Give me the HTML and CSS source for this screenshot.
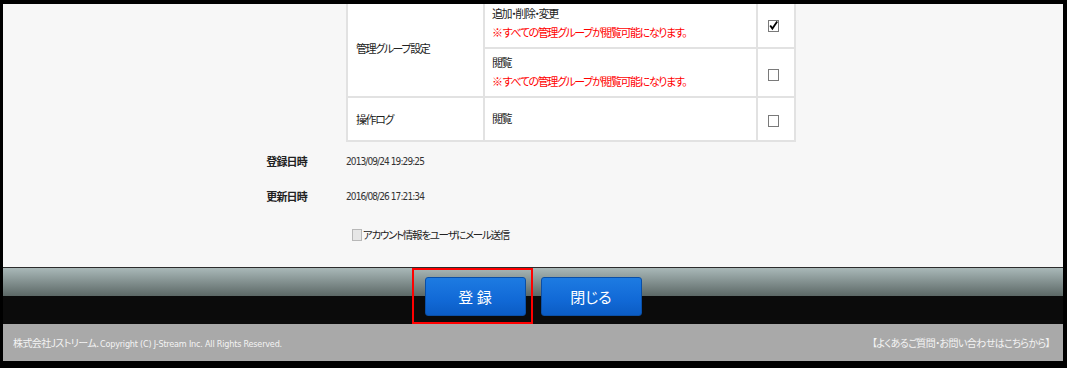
FILE: index.html
```html
<!DOCTYPE html>
<html lang="ja">
<head>
    <meta charset="UTF-8">
    <title>アカウント編集</title>
    <link rel="stylesheet" href="styles.css">
</head>
<body>
    <div class="frame">
        <div class="content">
            <div class="form-row">
                <div class="form-label"></div>
                <div class="form-value">
                    <table class="perm-table">
                        <tr>
                            <td class="perm-name" rowspan="2">管理グループ設定</td>
                            <td class="perm-desc">
                                追加・削除・変更
                                <div class="note">※ すべての管理グループが閲覧可能になります。</div>
                            </td>
                            <td class="perm-check"><span class="check is-checked"><svg viewBox="0 0 11 11" width="11" height="11"><path d="M2.2 5.4 L4.4 8.6 L9.2 1.6" fill="none" stroke="#000" stroke-width="1.8"/></svg></span></td>
                        </tr>
                        <tr>
                            <td class="perm-desc">
                                閲覧
                                <div class="note">※ すべての管理グループが閲覧可能になります。</div>
                            </td>
                            <td class="perm-check"><span class="check"></span></td>
                        </tr>
                        <tr class="single">
                            <td class="perm-name">操作ログ</td>
                            <td class="perm-desc">閲覧</td>
                            <td class="perm-check"><span class="check"></span></td>
                        </tr>
                    </table>
                </div>
            </div>

            <div class="form-row info-row">
                <div class="form-label">登録日時</div>
                <div class="form-value date">2013/09/24 19:29:25</div>
            </div>
            <div class="form-row info-row">
                <div class="form-label">更新日時</div>
                <div class="form-value date">2016/08/26 17:21:34</div>
            </div>
            <div class="form-row mail-row">
                <div class="form-label"></div>
                <label class="mail-opt"><span class="mail-box"></span>アカウント情報をユーザにメール送信</label>
            </div>
        </div>

        <div class="action-bar">
            <div class="actions">
                <span class="focus-wrap">
                    <button class="button">登 録</button>
                    <span class="focus-box"></span>
                </span>
                <button class="button">閉じる</button>
            </div>
        </div>

        <div class="footer">
            <span>株式会社Jストリーム. <span class="latin">Copyright (C) J-Stream Inc. All Rights Reserved.</span></span>
            <a class="footer-link" href="#">【よくあるご質問・お問い合わせはこちらから】</a>
        </div>
    </div>
</body>
</html>
```

FILE: styles.css
```css
* {
    margin: 0;
    padding: 0;
    box-sizing: border-box;
}

body {
    background: #000;
    padding: 4px 4px 0 3px;
    font-family: "Noto Sans CJK JP", sans-serif;
    font-feature-settings: "palt";
    font-size: 11px;
    color: #222;
}

.frame {
    width: 1060px;
}

.content {
    background: #f7f7f7;
    height: 263px;
    overflow: hidden;
}

.form-row {
    display: grid;
    grid-template-columns: 304px 1fr;
    column-gap: 39px;
}

.form-label {
    text-align: right;
    font-weight: bold;
    letter-spacing: -0.8px;
}

/* permissions table */
.perm-table {
    border-collapse: collapse;
    background: #fff;
    margin-top: -6px;
    margin-bottom: 2px;
    letter-spacing: -1.4px;
}

.perm-table td {
    border: 2px solid #e2e2e2;
}

.perm-name {
    width: 137px;
    padding: 0 8px;
    vertical-align: middle;
}

.perm-desc {
    width: 273px;
    height: 47px;
    padding: 4px 7px 5px;
    line-height: 19px;
    vertical-align: top;
}

.single td {
    height: 44px;
    vertical-align: middle;
}

.note {
    color: #f00;
}

.perm-check {
    width: 38px;
    text-align: center;
    vertical-align: middle;
}

.check {
    display: inline-block;
    width: 11px;
    height: 12px;
    border: 1px solid #7a7a7a;
    background: #fff;
    vertical-align: middle;
    margin-left: -6px;
}

.check svg {
    display: block;
    margin: -1px 0 0 -1px;
}

/* info rows */
.info-row {
    height: 35px;
    line-height: 35px;
}

.date {
    font-family: "DejaVu Sans Condensed", "DejaVu Sans", sans-serif;
    font-stretch: condensed;
    font-size: 10px;
    letter-spacing: -0.9px;
    color: #333;
}

.mail-row {
    padding-top: 13px;
}

.mail-opt {
    display: flex;
    align-items: center;
    padding-left: 6px;
    font-size: 10.5px;
    letter-spacing: -1.3px;
    line-height: 16px;
}

.mail-box {
    width: 10px;
    height: 12px;
    border: 1px solid #b8b8b8;
    background: #e6e6e6;
    margin-right: 1px;
}

/* action bar */
.action-bar {
    height: 57px;
    border-top: 1px solid #2c2c2c;
    background: linear-gradient(to bottom, #a9b8b8 0, #5c6866 28px, #0b0b0b 28px, #0b0b0b 100%);
    padding-top: 9px;
}

.actions {
    display: flex;
    justify-content: center;
    gap: 15px;
}

.focus-wrap {
    position: relative;
    display: block;
}

.focus-box {
    position: absolute;
    left: -13px;
    top: -9px;
    right: -7px;
    bottom: -8px;
    border: 2px solid #f00;
}

.button {
    display: block;
    width: 101px;
    height: 39px;
    background: linear-gradient(to bottom, #1d7be2 0%, #1169d6 60%, #0b5cc4 100%);
    border: 1px solid #0a4fa6;
    border-radius: 3px;
    color: #fff;
    font-family: "Noto Sans CJK JP", sans-serif;
    font-feature-settings: "palt";
    font-size: 15px;
    cursor: pointer;
}

.button + .button {
    width: 100px;
}

/* footer */
.footer {
    height: 37px;
    background: #a9a9a9;
    color: #f4f4f4;
    font-size: 10px;
    letter-spacing: -0.6px;
    display: flex;
    justify-content: space-between;
    align-items: center;
    padding: 0 13px 0 10px;
}

.latin {
    font-family: "DejaVu Sans Condensed", "DejaVu Sans", sans-serif;
    font-stretch: condensed;
    font-size: 9px;
    letter-spacing: -0.2px;
}

.footer-link {
    color: #f4f4f4;
    text-decoration: none;
}
```
